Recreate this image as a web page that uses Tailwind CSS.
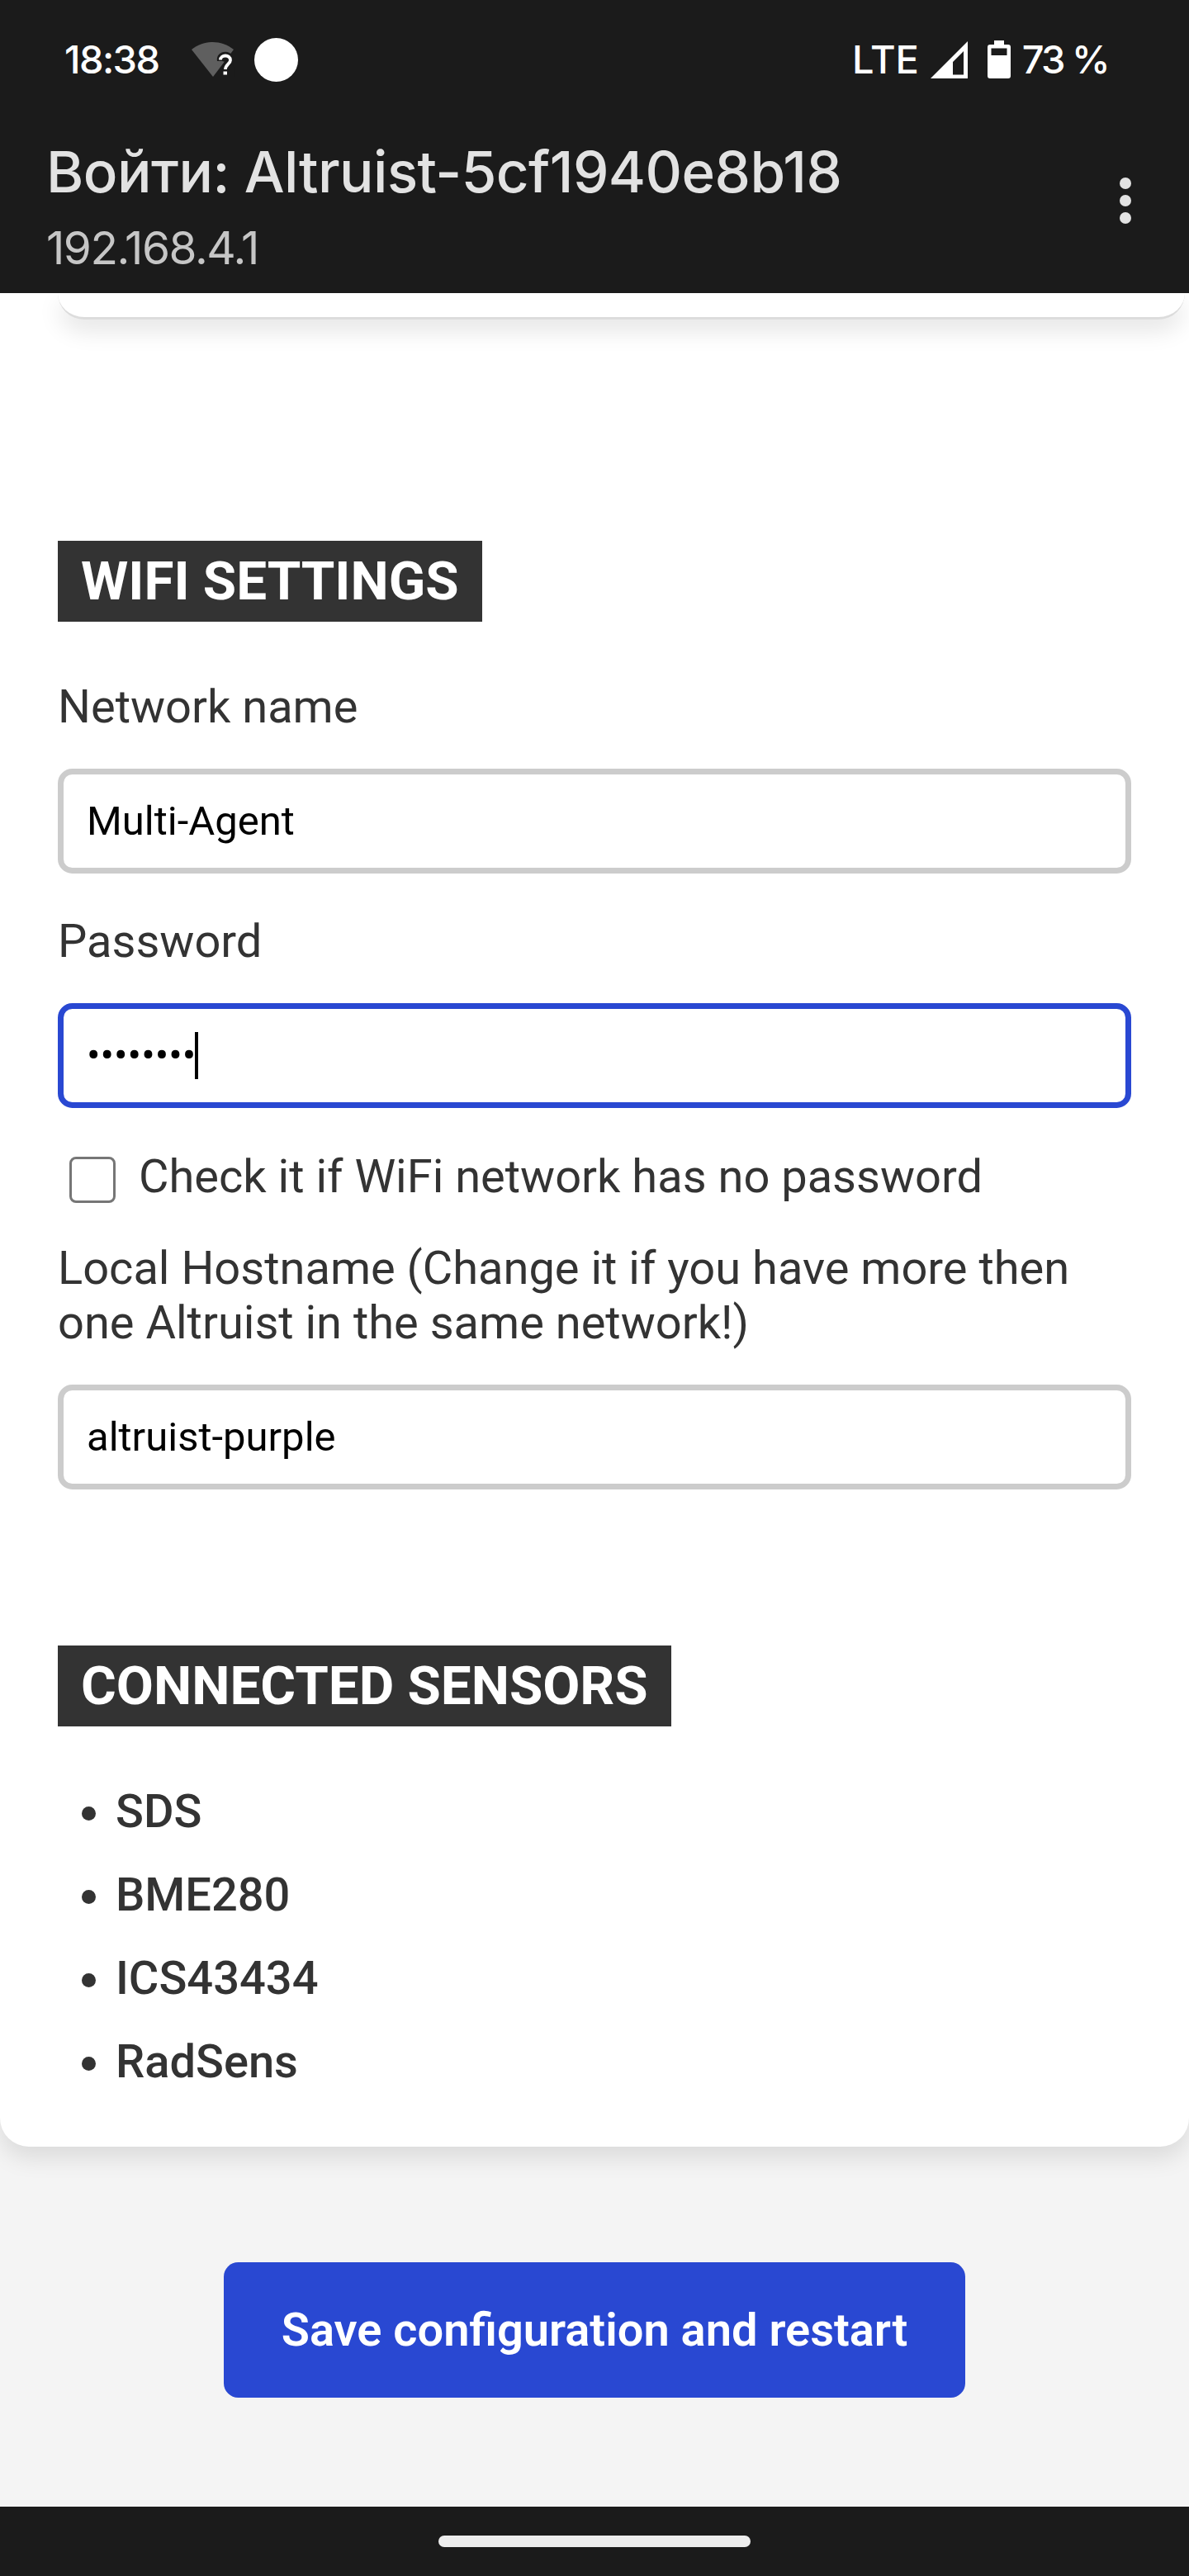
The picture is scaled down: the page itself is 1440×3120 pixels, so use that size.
<!DOCTYPE html>
<html lang="en">
<head>
<meta charset="utf-8">
<title>Altruist configuration</title>
<script src="https://cdn.jsdelivr.net/npm/@tailwindcss/browser@4"></script>
</head>
<body class="w-[1440px] h-[3120px] flex flex-col overflow-hidden bg-[#f4f4f4] font-[Roboto,sans-serif] text-[56px] leading-[66px] text-[#333333]">
  <header class="relative z-10 h-[355px] shrink-0 bg-[#1b1b1b] font-[Inter,sans-serif]">
    <div class="flex h-[144px] items-center pl-[78px] pr-[98px] text-[47px] font-medium text-white">
      <span class="w-[118px] whitespace-nowrap tracking-[-1.6px]">18:38</span>
      <svg class="ml-[36px] h-[42px] w-[52px]" viewBox="0 0 52 42">
        <path d="M0 9C15-3 36-3 51 9L26 42Z" fill="#5f5f5f"/>
        <path d="M31 23C29 11 45 8 50 17L52 42H37V33C37 29 40 26 41 24L37 23Z" fill="#1b1b1b"/>
        <path d="M35 21.500C35 15 47 14.500 47 22C47 26 41 27 41 33" fill="none" stroke="#fff" stroke-width="3.800"/>
        <path d="M38.500 35.500H43V39.500H38.500Z" fill="#fff"/>
      </svg>
      <span class="ml-[24px] size-[53px] rounded-full bg-white"></span>
      <span class="ml-auto tracking-[-0.2px]">LTE</span>
      <svg class="ml-[14px] h-[45px] w-[45px]" viewBox="0 0 45 45">
        <path fill-rule="evenodd" d="M45 0V45H0ZM40 12L27 25V40.500H40Z" fill="#fff"/>
      </svg>
      <svg class="ml-[24px] h-[46px] w-[28px]" viewBox="0 0 28 46">
        <path fill-rule="evenodd" d="M8 0H20V5H25Q28 5 28 8V43Q28 46 25 46H3Q0 46 0 43V8Q0 5 3 5H8ZM4.500 9.500V18H23.500V9.500Z" fill="#fff"/>
      </svg>
      <span class="ml-[14px] whitespace-nowrap tracking-[-2.600px]">73 %</span>
    </div>
    <div class="flex items-center justify-between pl-[56px] pr-[70px]">
      <div>
        <h1 class="mt-[22px] text-[69px] font-medium leading-[84px] tracking-[-0.52px] text-[#e2e2e2] whitespace-nowrap">Войти: Altruist-5cf1940e8b18</h1>
        <p class="mt-[16px] text-[55px] leading-[68px] tracking-[-1.5px] text-[#c6c6c6]">192.168.4.1</p>
      </div>
      <div class="flex flex-col gap-[7px] pt-[8px]">
        <span class="size-[14px] rounded-full bg-[#e2e2e2]"></span>
        <span class="size-[14px] rounded-full bg-[#e2e2e2]"></span>
        <span class="size-[14px] rounded-full bg-[#e2e2e2]"></span>
      </div>
    </div>
  </header>

  <main class="h-[2245px] shrink-0 rounded-b-[35px] bg-white px-[70px] shadow-[0_14px_28px_rgba(0,0,0,0.1)]">
    <div class="h-[32px] w-[1365px] rounded-b-[35px] border-b-[3px] border-[#dcdcdc] bg-white shadow-[0_14px_28px_rgba(0,0,0,0.1)]"></div>

    <h2 class="mt-[268px] flex h-[98px] w-fit items-center bg-[#333333] px-[28px] pb-[2px] text-[65.5px] font-bold leading-[77px] text-white whitespace-nowrap">WIFI SETTINGS</h2>

    <label class="mt-[70px] block">Network name</label>
    <div class="mt-[42px] flex h-[127px] items-center rounded-[17.5px] border-[7px] border-[#cccccc] px-[28px] text-[49px] leading-[57px] text-black">Multi-Agent</div>

    <label class="mt-[49px] block">Password</label>
    <div class="mt-[42px] flex h-[127px] items-center rounded-[17.5px] border-[7px] border-[#2948d2] px-[28px] text-[49px] leading-[57px] text-black">••••••••<span class="-ml-px h-[57px] w-[4px] bg-black"></span></div>

    <label class="mt-[49px] flex h-[80px] pl-[14px]">
      <span class="mt-[10px] size-[56px] rounded-[8px] border-[3.5px] border-[#767676]"></span>
      <span class="ml-[28px] mt-px">Check it if WiFi network has no password</span>
    </label>

    <label class="mt-[32px] block">Local Hostname (Change it if you have more then<br>one Altruist in the same network!)</label>
    <div class="mt-[42px] flex h-[127px] items-center rounded-[17.5px] border-[7px] border-[#cccccc] px-[28px] text-[49px] leading-[57px] text-black">altruist-purple</div>

    <h2 class="mt-[189px] flex h-[98px] w-fit items-center bg-[#333333] px-[28px] pb-[2px] text-[65.5px] font-bold leading-[77px] text-white whitespace-nowrap">CONNECTED SENSORS</h2>

    <ul class="mt-[70px] flex flex-col gap-[35px] pl-[29px] font-medium">
      <li class="flex items-center gap-[24px]"><span class="mt-[5px] size-[17px] rounded-full bg-[#333333]"></span>SDS</li>
      <li class="flex items-center gap-[24px]"><span class="mt-[5px] size-[17px] rounded-full bg-[#333333]"></span>BME280</li>
      <li class="flex items-center gap-[24px]"><span class="mt-[5px] size-[17px] rounded-full bg-[#333333]"></span>ICS43434</li>
      <li class="flex items-center gap-[24px]"><span class="mt-[5px] size-[17px] rounded-full bg-[#333333]"></span>RadSens</li>
    </ul>
  </main>

  <div class="flex h-[436px] shrink-0 justify-center pt-[140px]">
    <button class="h-[164px] w-[898px] rounded-[17.5px] bg-[#2948d2] font-semibold text-white whitespace-nowrap">Save configuration and restart</button>
  </div>

  <footer class="flex h-[84px] shrink-0 justify-center bg-[#1b1b1b] pt-[35px]">
    <span class="h-[14px] w-[378px] rounded-full bg-[#ededed]"></span>
  </footer>
</body>
</html>
